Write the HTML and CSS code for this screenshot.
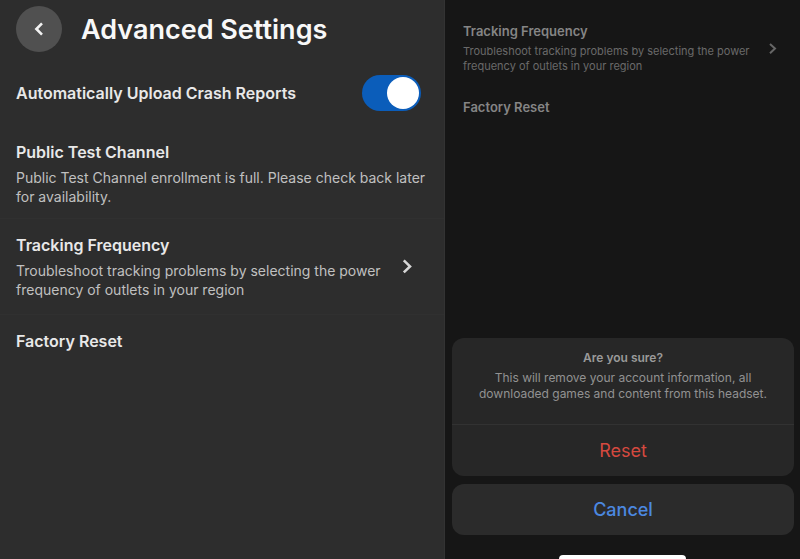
FILE: index.html
```html
<!DOCTYPE html>
<html lang="en">
<head>
<meta charset="utf-8">
<meta name="viewport" content="width=device-width, initial-scale=1">
<title>Advanced Settings</title>
<link rel="stylesheet" href="styles.css">
</head>
<body>
<div class="screens">
  <main class="settings">
    <header class="header">
      <button class="back" type="button" aria-label="Back">
        <svg width="10" height="14" viewBox="0 0 10 14" aria-hidden="true"><path d="M8 1.4 L2.4 7 L8 12.6"/></svg>
      </button>
      <h1 class="title">Advanced Settings</h1>
    </header>
    <div class="row row-toggle">
      <label class="name" for="crash">Automatically Upload Crash Reports</label>
      <input class="toggle" id="crash" type="checkbox" role="switch" checked>
    </div>
    <section class="row row-channel">
      <div class="text">
        <h2 class="name">Public Test Channel</h2>
        <p class="note">Public Test Channel enrollment is full. Please check back later for availability.</p>
      </div>
    </section>
    <a class="row row-link" href="#frequency">
      <span class="text">
        <span class="name">Tracking Frequency</span>
        <span class="note">Troubleshoot tracking problems by selecting the power frequency of outlets in your region</span>
      </span>
      <svg class="chevron" width="10" height="16" viewBox="0 0 10 16" aria-hidden="true"><path d="M1.8 1.4 L8 7.4 L1.8 13.4"/></svg>
    </a>
    <a class="row" href="#reset"><span class="name">Factory Reset</span></a>
  </main>

  <section class="dimmed">
    <div class="backdrop">
      <a class="small-row" href="#frequency">
        <span class="text">
          <span class="small-name">Tracking Frequency</span>
          <span class="small-note">Troubleshoot tracking problems by selecting the power frequency of outlets in your region</span>
        </span>
        <svg class="small-chevron" width="8" height="12" viewBox="0 0 8 12" aria-hidden="true"><path d="M1 1 L6 5.6 L1 10.2"/></svg>
      </a>
      <a class="small-row" href="#reset"><span class="small-name">Factory Reset</span></a>
    </div>
    <div class="sheet" role="dialog" aria-labelledby="ask">
      <div class="card">
        <div class="message">
          <h2 class="ask" id="ask">Are you sure?</h2>
          <p class="warning">This will remove your account information, all downloaded games and content from this headset.</p>
        </div>
        <button class="action reset" type="button">Reset</button>
      </div>
      <button class="action cancel" type="button">Cancel</button>
    </div>
    <div class="home"></div>
  </section>
</div>
</body>
</html>
```
FILE: styles.css
```css
* { box-sizing: border-box; }

body {
  margin: 0;
  background: #161616;
  font-family: Inter, "Liberation Sans", sans-serif;
}

h1, h2, p { margin: 0; }
a { color: inherit; text-decoration: none; }
button { border: 0; padding: 0; font-family: inherit; }
svg { fill: none; flex: none; }

.screens {
  display: grid;
  grid-template-columns: 445fr 355fr;
  min-height: 100vh;
}

.settings {
  background: #2d2d2d;
  border-right: 1px solid #333;
  padding-top: 6px;
}

.header {
  display: flex;
  align-items: center;
  gap: 19px;
  padding: 0 16px;
}

.back {
  display: grid;
  place-items: center;
  width: 46px;
  height: 46px;
  border-radius: 50%;
  background: #505050;
}
.back svg { stroke: #f2f2f2; stroke-width: 2.6; }

.title {
  padding-top: 2px;
  color: #f8f8f8;
  font-size: 27px;
  line-height: 32px;
  font-weight: 600;
}

.row {
  display: flex;
  align-items: center;
  justify-content: space-between;
  padding: 16px;
}
.row-toggle { padding: 23px 23px 15px 16px; }
.row-channel { padding-bottom: 12px; border-bottom: 1px solid #303030; }
.row-link { padding-right: 32px; padding-bottom: 15px; border-bottom: 1px solid #303030; }

.text { display: flex; flex-direction: column; }
.row .text { gap: 6px; }

.name {
  color: #e8e8e8;
  font-size: 16px;
  line-height: 20px;
  font-weight: 600;
}
.note {
  color: #c0c0c0;
  font-size: 14px;
  line-height: 19px;
}
.row-link .text { max-width: 376px; }
.chevron { stroke: #d6d6d6; stroke-width: 2.6; }

.toggle {
  appearance: none;
  display: grid;
  align-items: center;
  justify-content: end;
  width: 59px;
  height: 36px;
  margin: 0;
  padding: 2px;
  border-radius: 18px;
  background: #0b5dba;
}
.toggle::before {
  content: "";
  width: 32px;
  height: 32px;
  border-radius: 50%;
  background: #fff;
}

.dimmed {
  display: flex;
  flex-direction: column;
  background: #161616;
}

.backdrop {
  display: flex;
  flex-direction: column;
  gap: 25px;
  flex: 1;
  padding: 23px 23px 0 18px;
}
.small-row {
  display: flex;
  align-items: center;
  justify-content: space-between;
}
.small-row .text { gap: 5px; max-width: 300px; }
.small-name {
  color: #858585;
  font-size: 13px;
  line-height: 16px;
  font-weight: 600;
}
.small-note {
  color: #6a6a6a;
  font-size: 11px;
  line-height: 15px;
}
.small-chevron { stroke: #666; stroke-width: 2; }

.sheet {
  display: flex;
  flex-direction: column;
  gap: 8px;
  padding: 0 6px 20px 7px;
}
.card {
  overflow: hidden;
  border-radius: 12px;
  background: #272727;
}
.message {
  padding: 12px 24px 22px;
  text-align: center;
  border-bottom: 1px solid #323232;
}
.ask {
  margin-bottom: 4px;
  color: #9a9a9a;
  font-size: 12px;
  line-height: 16px;
  font-weight: 600;
}
.warning {
  color: #929292;
  font-size: 12px;
  line-height: 16px;
}
.action {
  display: block;
  width: 100%;
  height: 51px;
  font-size: 18px;
  line-height: 22px;
}
.reset { background: transparent; color: #d5493f; }
.cancel { border-radius: 12px; background: #2b2b2b; color: #4b88e0; font-weight: 500; }

.home {
  align-self: center;
  width: 36%;
  height: 4px;
  border-radius: 4px 4px 0 0;
  background: #fff;
}
```
